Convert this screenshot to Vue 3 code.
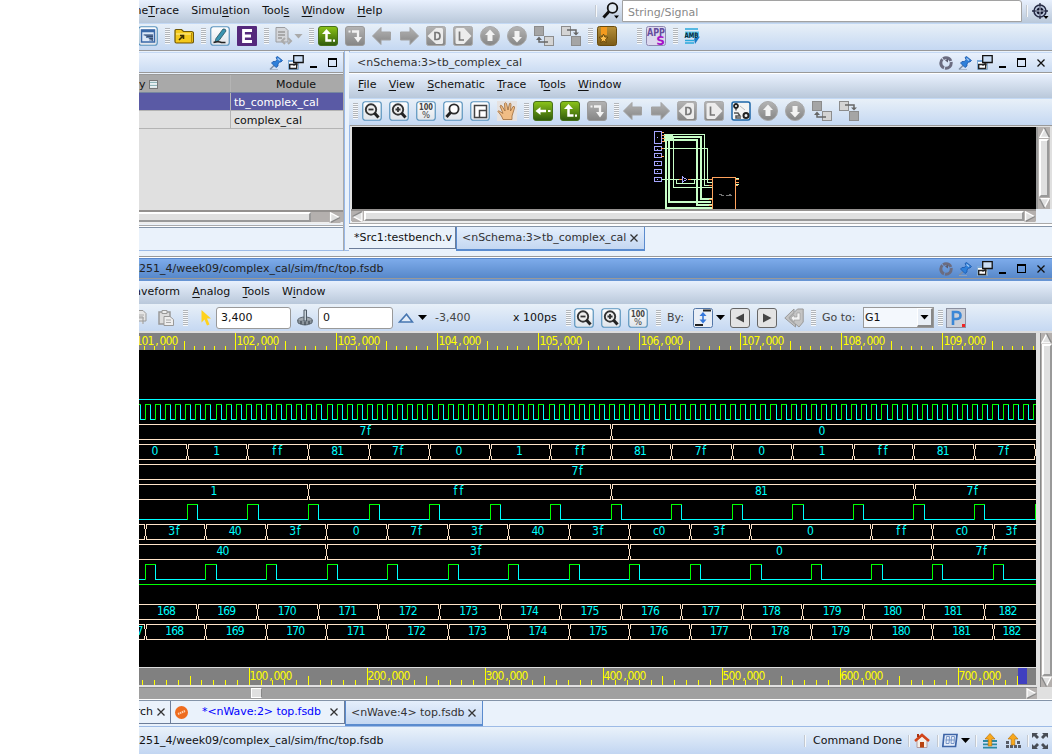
<script setup>
const mainMenu = [['One', 'T', 'race'], ['Simul', 'a', 'tion'], ['Tool', 's', ''], ['', 'W', 'indow'], ['', 'H', 'elp']]
const schemaMenu = [['', 'F', 'ile'], ['', 'V', 'iew'], ['', 'S', 'chematic'], ['', 'T', 'race'], ['T', 'o', 'ols'], ['', 'W', 'indow']]
const waveMenu = [['Wa', '', 'veform'], ['', 'A', 'nalog'], ['', 'T', 'ools'], ['W', 'i', 'ndow']]

const mainTools = ['filter', '|', 'folder', '|', 'edit', 'verdi', '|', 'doc', 'v', '|', 'driver', 'turn', 'back', 'fwd', 'd', 'l', 'up', 'down', 'hierup', 'hierdn', '|', 'book', ' ', '|', 'apps', '|', 'amb']
const schemaTools = ['|', 'zoomout', 'zoomin', 'hundred', 'zoom', 'fit', 'hand', '|', 'load', 'driver', 'turn', '|', 'back', 'fwd', 'd', 'l', 'gears', 'up', 'down', 'hierup', 'hierdn']

const range = (a, b) => Array.from({ length: b - a + 1 }, (_, i) => a + i)
const px = (v) => Math.floor(v) + 0.5
const chars = (s, cx) => [...s].map((_, i) => cx + (i - (s.length - 1) / 2) * 6).join(' ')
const left = (s, x) => [...s].map((_, i) => x + 3 + i * 6).join(' ')

const STEP = 60.55
function ticks(origin, pitch, count) {
  return range(-10, count).map((i) => {
    const k = ((i % 10) + 10) % 10
    return { x: px(origin + i * pitch - 139), major: k === 0, half: k === 5 }
  }).filter((t) => t.x > 0 && t.x < 898)
}
const tickPath = (list, half, minor) => list.map((t) => `M${t.x} ${t.major ? 0 : t.half ? half : minor}V17`).join('')
const topTicks = tickPath(ticks(235.1, 10.1, 85), 8, 13)
const botTicks = tickPath(ticks(249.2, 11.82, 65), 8, 12)
const topLabels = range(101, 109).map((n, i) => ({ s: n + ',000', x: Math.floor(134.1 + i * 101) - 139 + 2 }))
const botLabels = range(1, 7).map((n, i) => ({ s: n + '00,000', x: Math.floor(249.2 + i * 118.2) - 139 + 1 }))

const seq = (start, n) => range(0, n - 1).map((i) => start + i * STEP)
function bus(y, edges, labels) {
  let d = ''
  let from = -4
  for (const e of [...edges.map((v) => Math.floor(v) - 139), 905]) {
    const a = e - 0.5, t = y + 0.5, b = y + 15.5
    d += `M${from} ${t}H${a}V${t + 4}M${a} ${b - 4}V${b}H${from}`
    d += `M${e + 0.5} ${t + 4}V${b - 4}M${e + 1.5} ${t}V${t + 4}M${e + 1.5} ${b - 4}V${b}`
    from = e + 1
  }
  return { d, y, labels }
}
const mids = (edges, names, first, last) => names.map((s, i) => ({
  s,
  x: (i === 0 && first ? first : i === names.length - 1 && last ? last : (edges[i - (first ? 1 : 0)] + edges[i + (first ? 0 : 1)]) / 2 - 1) - 139
}))
const eB = seq(187.4, 15)
const eF = seq(145.3, 15)
const eFm = eF.filter((_, i) => i !== 11)
const eJ = seq(197.3, 14)
const nums = range(168, 182).map(String)
const buses = [
  bus(74, [611], mids([611], ['7f', '0'], 366, 822)),
  bus(94, eB, mids(eB, ['0', '1', 'ff', '81', '7f', '0', '1', 'ff', '81', '7f', '0', '1', 'ff', '81', '7f'], 155)),
  bus(114, [], [{ s: '7f', x: 439 }]),
  bus(134, [308, 611, 914], mids([308, 611, 914], ['1', 'ff', '81', '7f'], 214, 973)),
  bus(174, eFm, mids(eFm, ['3f', '40', '3f', '0', '7f', '3f', '40', '3f', 'c0', '3f', '0', 'ff', 'c0', '3f'], 0, 1012)),
  bus(194, [326, 629, 932], mids([326, 629, 932], ['40', '3f', '0', '7f'], 223, 982)),
  bus(254, eJ, mids(eJ, nums, 166.5, 1008)),
  bus(274, eF, [{ s: '7', x: 1 }, ...mids(eF, nums, 0, 1012)])
]
function pulses(y, start, period, width, n) {
  let high = '', low = ''
  for (let i = -1; i < n; i++) {
    const a = px(start + i * period - 139), b = px(start + i * period + width - 139), c = px(start + (i + 1) * period - 139)
    high += `M${a} ${y + 16}V${y + 0.5}H${b}`
    low += `M${b} ${y}V${y + 15.5}H${c - 0.5}`
  }
  return { high, low }
}
const waves = [
  pulses(54, 145.4, 10.09, 5.05, 90),
  pulses(154, 187.4, STEP, 10.1, 15),
  pulses(214, 145.4, STEP, 10.1, 15)
]
</script>

<template>
  <svg class="sprite" width="0" height="0">
    <defs>
      <linearGradient id="gGray" x2="0" y2="1"><stop stop-color="#b4b4b4" /><stop offset="1" stop-color="#858585" /></linearGradient>
      <linearGradient id="gGreen" x2="0" y2="1"><stop stop-color="#8cc518" /><stop offset="1" stop-color="#2f5a0c" /></linearGradient>
      <linearGradient id="gWhite" x2="0" y2="1"><stop stop-color="#fff" /><stop offset="1" stop-color="#dfe4ea" /></linearGradient>
      <linearGradient id="gGold" x2="0" y2="1"><stop stop-color="#b8913a" /><stop offset="1" stop-color="#7a5a16" /></linearGradient>
    </defs>
    <symbol id="frame" viewBox="0 0 20 20"><rect x=".75" y=".75" width="18.5" height="18.5" rx="2.5" fill="url(#gWhite)" stroke="#5a94be" stroke-width="1.2" /></symbol>
    <symbol id="filter" viewBox="0 0 20 20"><use href="#frame" /><path d="M3.500 4h13v12h-13z" fill="#dce8f8" stroke="#3a68a8" stroke-width="1.500" /><path d="M3 5h14" stroke="#3a68a8" stroke-width="2.500" /><path d="M5.500 8.500h9.500v7zM8 8.500" fill="#3a4f70" /><path d="M5.500 9h9.500M8 11.500h7M11 14h4" stroke="#5e7fae" /></symbol>
    <symbol id="folder" viewBox="0 0 20 20"><path d="M1 4.500q0-1 1-1h5.500l2 2h8q2 0 2 2v8q0 1.500-2 1.500h-15q-1.500 0-1.500-1.500z" fill="#f3c91e" stroke="#6d5708" stroke-width="1.200" /><path d="M2 8h16" stroke="#fff09a" /><path d="M5 14l4-4M6 9.500h3.500v3.500" fill="none" stroke="#3b2d00" stroke-width="1.600" /><path d="M17.500 7v9.500h-15" fill="none" stroke="#b48a08" /></symbol>
    <symbol id="edit" viewBox="0 0 20 20"><use href="#frame" /><path d="M6 12.500L13 3q3-.5 3 2L9 14.500l-4 1.500z" fill="#3b94b0" stroke="#23505e" stroke-width=".8" /><path d="M3.500 16.500q5-1.500 8 0h4" fill="none" stroke="#222" stroke-width="1.500" /></symbol>
    <symbol id="verdi" viewBox="0 0 20 20"><rect width="20" height="20" rx="1" fill="#55297c" /><path d="M15 4.500H6.500v11H15M6.500 10h7.500" fill="none" stroke="#fff" stroke-width="2.800" /></symbol>
    <symbol id="doc" viewBox="0 0 20 20"><path d="M3 1.500h9l3 3V16H3z" fill="#d4d6da" stroke="#9b9da1" /><path d="M5 6h7M5 9h7M5 12h4" stroke="#999" stroke-width="1.400" /><path d="M12 12l-3 3 3 3M15 12l3 3-3 3" fill="none" stroke="#aaa" stroke-width="2" /></symbol>
    <symbol id="driver" viewBox="0 0 20 20"><rect x=".5" y=".5" width="19" height="19" rx="2.500" fill="url(#gGreen)" stroke="#47701a" /><path d="M8.500 6v8.500H13.500" fill="none" stroke="#fff" stroke-width="2.500" /><path d="M4 8L8.500 3l4.500 5z" fill="#fff" /><path d="M15 13.500h2v2.200h-2z" fill="#fff" /></symbol>
    <symbol id="load" viewBox="0 0 20 20"><rect x=".5" y=".5" width="19" height="19" rx="2.500" fill="url(#gGreen)" stroke="#47701a" /><path d="M6 10h7" stroke="#fff" stroke-width="2.500" /><path d="M2.500 10l5-4v8z" fill="#fff" /><path d="M15 9h2.500v2H15z" fill="#fff" /></symbol>
    <symbol id="turn" viewBox="0 0 20 20"><rect x=".5" y=".5" width="19" height="19" rx="2.500" fill="url(#gGray)" stroke="#9a9a9a" /><path d="M7 5.500h6v7" fill="none" stroke="#f2f2f2" stroke-width="2.300" /><path d="M3.500 4.500h2v2h-2zM9 11h8L13 16.500z" fill="#f2f2f2" /></symbol>
    <symbol id="back" viewBox="0 0 20 20"><path d="M.5 10L9 1.500V6h9.500v8H9v4.500z" fill="url(#gGray)" stroke="#a2a2a2" /></symbol>
    <symbol id="fwd" viewBox="0 0 20 20"><path d="M19.500 10L11 1.500V6H1.500v8H11v4.500z" fill="url(#gGray)" stroke="#a2a2a2" /></symbol>
    <symbol id="d" viewBox="0 0 20 20"><rect x=".5" y=".5" width="19" height="19" rx="2" fill="url(#gGray)" stroke="#aaa" /><path d="M1.500 10L10 2h5.500q1.500 0 1.500 1.500v13q0 1.500-1.500 1.500H10z" fill="#ececec" /><path d="M9 6.500v7h2q3 0 3-3.500t-3-3.500z" fill="none" stroke="#777" stroke-width="1.700" /></symbol>
    <symbol id="l" viewBox="0 0 20 20"><rect x=".5" y=".5" width="19" height="19" rx="2" fill="url(#gGray)" stroke="#aaa" /><path d="M18.500 10L11 2H4Q2.500 2 2.500 3.500v13Q2.500 18 4 18h7z" fill="#ececec" /><path d="M6.500 5.500V14H11" fill="none" stroke="#777" stroke-width="1.700" /></symbol>
    <symbol id="up" viewBox="0 0 20 20"><circle cx="10" cy="10" r="9.500" fill="url(#gGray)" stroke="#a8a8a8" /><path d="M10 3.500l5 5.500h-2.500v6h-5V9H5z" fill="#f3f3f3" /></symbol>
    <symbol id="down" viewBox="0 0 20 20"><circle cx="10" cy="10" r="9.500" fill="url(#gGray)" stroke="#a8a8a8" /><path d="M10 16.500L5 11h2.500V5h5v6H15z" fill="#f3f3f3" /></symbol>
    <symbol id="hierup" viewBox="0 0 20 20"><rect x=".5" y=".5" width="9" height="9" fill="#a5a5a5" stroke="#8c8c8c" /><rect x="10.500" y="10.500" width="9" height="9" fill="#d4d4d4" stroke="#8c8c8c" /><path d="M5 12v4h9" fill="none" stroke="#666" stroke-width="1.500" /><path d="M2 14l3-3.500L8 14z" fill="#666" /></symbol>
    <symbol id="hierdn" viewBox="0 0 20 20"><rect x=".5" y=".5" width="9" height="9" fill="#d4d4d4" stroke="#8c8c8c" /><rect x="10.500" y="10.500" width="9" height="9" fill="#a5a5a5" stroke="#8c8c8c" /><path d="M6 4h9V8" fill="none" stroke="#666" stroke-width="1.500" /><path d="M12 6.500l3 3 3-3z" fill="#666" /></symbol>
    <symbol id="book" viewBox="0 0 20 20"><rect x=".5" y=".5" width="19" height="19" rx="2" fill="url(#gGold)" stroke="#6a4c0c" /><path d="M4 1h6v8H4z" fill="#f39a1e" /><path d="M6.500 8l1.300 3 3.200.3-2.500 2.200.8 3L6.500 15l-2.800 1.500.8-3L2 11.300l3.200-.3z" fill="#ffc04e" stroke="#5e3c00" stroke-width=".8" /></symbol>
    <symbol id="apps" viewBox="0 0 20 20"><rect x=".5" y=".5" width="19" height="19" rx="2" fill="#dcd8ee" stroke="#8e88b0" /><text x="10" y="9.500" text-anchor="middle" textLength="18" lengthAdjust="spacingAndGlyphs" font-size="10.500" font-weight="bold" fill="#654c9c">APP</text><text x="14.500" y="18.500" text-anchor="middle" font-size="12" font-weight="bold" fill="#a412c8">S</text></symbol>
    <symbol id="amb" viewBox="0 0 20 20"><path d="M3 3h13M3 14.500h9M3 17h9" stroke="#29a8dc" stroke-width="1.600" /><path d="M3 5.500h14v6H3z" fill="#5cc4ea" /><text x="9.500" y="11.500" text-anchor="middle" textLength="14" lengthAdjust="spacingAndGlyphs" font-size="7.500" font-weight="bold" fill="#0c2a3c">AMB</text><path d="M12 12.500l6-2-5 7.500z" fill="#1779c4" /></symbol>
    <symbol id="zoom" viewBox="0 0 20 20"><use href="#frame" /><circle cx="11" cy="8" r="4.600" fill="#fff" stroke="#2c2c2c" stroke-width="1.800" /><path d="M7.500 11.500L3.500 16" stroke="#222" stroke-width="3" /></symbol>
    <symbol id="zoomout" viewBox="0 0 20 20"><use href="#frame" /><circle cx="9" cy="8.500" r="5.200" fill="#eee" stroke="#333" stroke-width="1.900" /><path d="M6.500 8.500h5" stroke="#333" stroke-width="1.800" /><path d="M12.500 12l4 4.500" stroke="#222" stroke-width="3" /></symbol>
    <symbol id="zoomin" viewBox="0 0 20 20"><use href="#frame" /><circle cx="9" cy="8.500" r="5.200" fill="#eee" stroke="#333" stroke-width="1.900" /><path d="M6.500 8.500h5M9 6v5" stroke="#333" stroke-width="1.800" /><path d="M12.500 12l4 4.500" stroke="#222" stroke-width="3" /></symbol>
    <symbol id="hundred" viewBox="0 0 20 20"><use href="#frame" /><text x="10" y="9" text-anchor="middle" textLength="14" lengthAdjust="spacingAndGlyphs" font-size="8" font-weight="bold" fill="#444">100</text><text x="10" y="17" text-anchor="middle" font-size="8.500" fill="#444">%</text></symbol>
    <symbol id="fit" viewBox="0 0 20 20"><use href="#frame" /><path d="M4.500 4.500h12v12h-12zM9.500 9.500h7v7h-7z" fill="#fff" stroke="#444" stroke-width="1.500" /></symbol>
    <symbol id="hand" viewBox="0 0 20 20"><path d="M0 0h20v20H0z" fill="#e6e2e0" /><path d="M6 18.500C5 15 2.500 12.500 1 10.500q0-1.500 2 0l3 2L3 5q.5-1.500 2 0l3 5L7.500 2.500q1-1.500 2 0L11 9l1.500-6.500q1.500-1 1.500 1L13.500 10 16 5.500q2-.5 1.500 1.500L15 15v3.500z" fill="#f0bd85" stroke="#9c6a38" stroke-width=".8" /></symbol>
    <symbol id="gears" viewBox="0 0 20 20"><rect x="1" y="1" width="18" height="18" rx="2" fill="#f4f4f4" stroke="#1c66a8" stroke-width="1.500" /><circle cx="5" cy="5" r="2" fill="none" stroke="#222" stroke-width="1.800" /><circle cx="15" cy="14.500" r="2.500" fill="none" stroke="#222" stroke-width="2" /><path d="M5 8v1.500M3 12h4l2 3H5v2h5" fill="none" stroke="#555" stroke-width="1.500" /><path d="M9 5l5 4" stroke="#bbb" /></symbol>
    <symbol id="ring" viewBox="0 0 14 14"><circle cx="7" cy="7" r="5.200" fill="none" stroke="#6b6c80" stroke-width="3" stroke-dasharray="9 1 10 .8" /><path d="M6 4.500l3-2v4z" fill="#5b5c70" /></symbol>
    <symbol id="pin" viewBox="0 0 14 14"><path d="M1 13.500l5-5" stroke="#7d8da3" stroke-width="1.400" /><path d="M1 13.500h8" stroke="#9aa9bc" stroke-width=".7" /><path d="M7 1.500l1.500-1 5 4-1.500 1.500-1.500 0-1.500 2 0 2-2 1.500L2.500 7l1.500-1.500 2.500 0L8 3.500z" fill="#2f80da" stroke="#1c57a8" stroke-width=".8" /><path d="M8.500 2.500l2.500 2" stroke="#a7cdf7" stroke-width="1.200" /></symbol>
    <symbol id="float" viewBox="0 0 16 15"><path d="M.5 5.500h10v9H.5z" fill="#fff" stroke="#84add2" /><path d="M0 5h11v2H0z" fill="#7ba9d9" /><path d="M1.700 9.500h7v4h-7z" fill="#fff" stroke="#222" stroke-width="1.400" /><path d="M5.500 11l3-3M6.500 8H9v2.500" fill="none" stroke="#222" /><path d="M5.700.7h9.500v6.800H5.700z" fill="#c9dcf3" stroke="#111" stroke-width="1.300" /></symbol>
    <symbol id="arrow3d" viewBox="0 0 10 10"><path d="M0 0h10v10H0z" fill="#b4b0ae" /><path d="M1 1v8.500L9.500 5z" fill="#e0e0e0" /><path d="M1 9.500V.8L9 5" fill="none" stroke="#fff" stroke-width="1.200" /><path d="M1 9.500L9.500 5" stroke="#888" stroke-width="1.200" /></symbol>
  </svg>

  <main class="desk">
    <nav class="menu menu-main">
      <span v-for="(m, i) in mainMenu" :key="i">{{ m[0] }}<u>{{ m[1] }}</u>{{ m[2] }}</span>
      <div class="search">
        <i class="sep"></i>
        <svg width="18" height="18" viewBox="0 0 18 18"><circle cx="10.500" cy="6" r="4.800" fill="#dfe8f2" stroke="#111" stroke-width="1.800" /><path d="M7 9.500L1.500 15.500" stroke="#111" stroke-width="3" /><path d="M12 13.500h5l-2.500 3z" /></svg>
        <div class="search-box">String/Signal</div>
        <i class="sep"></i>
        <svg width="17" height="17" viewBox="0 0 17 17"><circle cx="8" cy="8" r="6" fill="#bcc9df" stroke="#252a44" stroke-width="1.500" /><circle cx="8" cy="8" r="3.500" fill="#10142e" /><path d="M8 0v16M0 8h16" stroke="#252a44" stroke-width="1.300" /><path d="M8 3.500v9M3.500 8h9" stroke="#dfe8f5" stroke-width=".8" /><path d="M11.500 13h5L14 16z" /></svg>
      </div>
    </nav>
    <div class="tools tools-main">
      <template v-for="(t, i) in mainTools" :key="i">
        <i v-if="t === '|'" class="grip"></i>
        <i v-else-if="t === ' '" class="space"></i>
        <i v-else-if="t === 'v'" class="drop pale"></i>
        <svg v-else class="ico"><use :href="'#' + t" /></svg>
      </template>
    </div>

    <div class="upper">
      <section class="left">
        <header class="title title-left">
          <svg width="14" height="14"><use href="#pin" /></svg>
          <svg width="16" height="15"><use href="#float" /></svg>
          <i class="min"></i><i class="max"></i>
        </header>
        <div class="table">
          <div class="row head"><span>y <i class="sorter"></i></span><span>Module</span></div>
          <div class="row picked"><span></span><span>tb_complex_cal</span></div>
          <div class="row"><span></span><span>complex_cal</span></div>
        </div>
        <div class="hscroll left-scroll"><div class="thumb"></div><svg width="12" height="11"><use href="#arrow3d" /></svg></div>
        <div class="left-foot"></div>
      </section>
      <section class="right">
        <header class="title"><span class="name">&lt;nSchema:3&gt;tb_complex_cal</span>
          <svg width="14" height="14"><use href="#ring" /></svg>
          <svg width="14" height="14"><use href="#pin" /></svg>
          <svg width="16" height="15"><use href="#float" /></svg>
          <i class="min"></i><i class="max"></i><svg width="8" height="8" class="cross"><path d="M.5.5l7 7M7.500.5l-7 7" /></svg>
        </header>
        <nav class="menu menu-schema"><span v-for="(m, i) in schemaMenu" :key="i">{{ m[0] }}<u>{{ m[1] }}</u>{{ m[2] }}</span></nav>
        <div class="tools tools-schema">
          <template v-for="(t, i) in schemaTools" :key="i">
            <i v-if="t === '|'" class="grip"></i>
            <svg v-else class="ico"><use :href="'#' + t" /></svg>
          </template>
        </div>
        <div class="canvas-wrap">
          <svg class="schema" width="684" height="82" viewBox="352 127 684 82" shape-rendering="crispEdges">
            <g fill="none" stroke="#a6a6ff">
              <path d="M654.500 131.500h7v12h-7zM654.500 146.500h7v4h-7zM654.500 153.500h7v4h-7zM654.500 161.500h7v4h-7zM654.500 169.500h7v4h-7zM654.500 177.500h7v4h-7z" />
              <path d="M657 137.500h1M657 149.500h1M657 155.500h1M657 163.500h1M657 171.500h1M657 179.500h1" />
            </g>
            <g fill="none" stroke="#c8ffc8">
              <path d="M664 134.500h40.500v50.500h7.500M662 148.500h45.500v33.500h4M673.500 138v49.500h38M662 179.500h18M690 179.500h21M676.500 180v3.500h18v-4" />
              <path d="M664 137h37v62h11M664 140h33v65h15M669 138v64h42M666 136v72h46" stroke-width="2" />
              <path d="M664 137h9" stroke-width="4" />
            </g>
            <path d="M662 132.500h2M662 135.500h3M662 138.500h3M662 141.500h3M661 148.500h3M661 156.500h3M679 179.500h3M688 179.500h3M709 179.500h3M709 185.500h3M709 199.500h3M709 205.500h3M736 179.500h3M736 182.500h3M736 185.500h2" stroke="#ffa25c" />
            <path d="M712.500 209v-31.500h23V209" fill="none" stroke="#ffa25c" />
            <path d="M682.500 177v5l4-2.500z" fill="none" stroke="#a6a6ff" />
            <path d="M719 194.500h3M721 195.500h3M726 195.500h6M729 194.500h2" stroke="#777" />
            <path d="M736 178.500h3M736 184.500h3" stroke="#c8ffc8" />
          </svg>
          <div class="vscroll"><svg width="11" height="12" class="r-up"><use href="#arrow3d" /></svg><div class="thumb"></div><svg width="11" height="12" class="r-dn"><use href="#arrow3d" /></svg></div>
        </div>
        <div class="hscroll right-scroll"><svg width="13" height="11" class="r-lf"><use href="#arrow3d" /></svg><div class="thumb"></div><svg width="12" height="11"><use href="#arrow3d" /></svg></div>
        <div class="tabs">
          <div class="tab src">*Src1:testbench.v</div>
          <div class="tab on">&lt;nSchema:3&gt;tb_complex_cal <svg width="8" height="8" class="cross"><path d="M.5.5l7 7M7.500.5l-7 7" /></svg></div>
        </div>
      </section>
    </div>

    <section class="wave">
      <header class="title blue"><span class="name">251_4/week09/complex_cal/sim/fnc/top.fsdb</span>
        <svg width="14" height="14"><use href="#ring" /></svg>
        <svg width="14" height="14"><use href="#pin" /></svg>
        <svg width="16" height="15"><use href="#float" /></svg>
        <i class="min"></i><i class="max"></i><svg width="8" height="8" class="cross"><path d="M.5.5l7 7M7.500.5l-7 7" /></svg>
      </header>
      <nav class="menu menu-wave"><span v-for="(m, i) in waveMenu" :key="i">{{ m[0] }}<u>{{ m[1] }}</u>{{ m[2] }}</span></nav>
      <div class="tools tools-wave">
        <svg class="copy" width="8" height="18"><path d="M-3 1.500h7l3 3V12H-3zM-3 8h7v7" fill="#e5e5e5" stroke="#999" /><path d="M0 6h5M0 9h5" stroke="#aaa" /></svg>
        <svg class="paste" width="17" height="18"><path d="M1 3h11v12H1z" fill="#ddd" stroke="#999" stroke-width="1.500" /><path d="M4 1.500h5v3H4z" fill="#eee" stroke="#999" /><path d="M6 7.500h6l3.500 3v6H6z" fill="#eee" stroke="#999" /><path d="M8 11h5M8 13.500h5" stroke="#aaa" /></svg>
        <i class="grip"></i>
        <svg class="cursor" width="10" height="16"><path d="M.5 0v12.500l3-3 2.500 6 2.500-1-2.500-6H10z" fill="#ffd21c" /></svg>
        <div class="field">3,400</div>
        <svg class="marker" width="18" height="17"><ellipse cx="9" cy="11.500" rx="7.500" ry="3.500" fill="#a2a9b0" stroke="#5d6872" /><path d="M2 11v3q7 4 14 0v-3" fill="#8b949c" stroke="#5d6872" /><path d="M5 12v3M9 13v3M13 12v3" stroke="#3c4650" stroke-width="1.200" /><path d="M8 1h2.500v11H8z" fill="#cad4dc" stroke="#4d5964" /></svg>
        <div class="field">0</div>
        <svg class="delta" width="16" height="10"><path d="M1.500 9L8.500 1.200 14.500 9z" fill="#e2ecf8" stroke="#4676b0" stroke-width="1.600" /></svg>
        <i class="drop"></i><span class="diff">-3,400</span><span class="unit">x 100ps</span>
        <i class="grip"></i>
        <svg class="ico"><use href="#zoomout" /></svg><svg class="ico"><use href="#zoomin" /></svg><svg class="ico"><use href="#hundred" /></svg>
        <i class="grip grip-by"></i><span class="by">By:</span>
        <svg class="edge" width="20" height="20"><rect x=".5" y=".5" width="19" height="19" rx="2" fill="#e9eef6" stroke="#5377a8" /><path d="M10 2.500h8M2 17h8" stroke="#222" stroke-width="1.800" /><path d="M10 5v9" stroke="#2d6fd0" stroke-width="1.500" /><path d="M6.500 8L10 4l3.500 4zM6.500 11.500L10 15.500l3.500-4z" fill="#3678dc" /></svg>
        <i class="drop"></i>
        <svg class="step" width="20" height="20"><rect x=".5" y=".5" width="19" height="19" rx="2.500" fill="#e3e3e3" stroke="#666" /><path d="M14 5.500v9L5.500 10z" fill="#444" /></svg>
        <svg class="step" width="20" height="20"><rect x=".5" y=".5" width="19" height="19" rx="2.500" fill="#e3e3e3" stroke="#666" /><path d="M6 5.500v9l8.500-4.500z" fill="#444" /></svg>
        <svg class="undo" width="20" height="20"><path d="M.8 10L10 1v3.500L13.500 1h5.700v13L15 19l-3.500-3v3z" fill="#c4c4c4" stroke="#999" /><path d="M5 10l5-5M5 10l6 6" stroke="#a5a5a5" stroke-width="1.500" /><path d="M7 10l3-3v2h3V5h3v7h-6v2z" fill="#f2f2f2" stroke="#999" stroke-width=".6" /></svg>
        <i class="grip"></i><span class="goto">Go to:</span>
        <div class="select"><span>G1</span><b><i class="drop"></i></b></div>
        <i class="grip"></i>
        <svg class="pico" width="20" height="20"><rect x=".5" y=".5" width="19" height="19" fill="#ccd0d9" stroke="#8b90a0" /><path d="M7 17V4h3.500q4 0 4 3.500t-4 3.500H8" fill="none" stroke="#3b87d6" stroke-width="2.600" /><path d="M16 16h3v3h-3z" fill="#f32525" /></svg>
      </div>
      <div class="plot-wrap">
        <div class="plot">
          <svg class="ruler r-top" width="897" height="17"><path :d="topTicks" /><text v-for="l in topLabels" :key="l.s" :x="left(l.s, l.x)" y="12">{{ l.s }}</text></svg>
          <svg class="signals" width="897" height="317">
            <path d="M0 49.500H897" stroke="#00ffff" /><path d="M0 234.500H897" stroke="#00ff00" />
            <g v-for="(w, i) in waves" :key="'w' + i" fill="none"><path :d="w.low" stroke="#00ffff" /><path :d="w.high" stroke="#00ff00" /></g>
            <g v-for="b in buses" :key="b.y">
              <path :d="b.d" fill="none" stroke="#ffe4c8" />
              <text v-for="(l, i) in b.labels" :key="i" :x="chars(l.s, l.x)" :y="b.y + 11">{{ l.s }}</text>
            </g>
          </svg>
          <svg class="ruler r-bot" width="897" height="17"><path :d="botTicks" /><text v-for="l in botLabels" :key="l.s" :x="left(l.s, l.x)" y="12">{{ l.s }}</text><rect x="879" width="9" height="16" fill="#4040c0" /></svg>
          <div class="track"><i></i><svg width="11" height="11"><use href="#arrow3d" /></svg></div>
        </div>
        <div class="vscroll"><svg width="11" height="11" class="r-up"><use href="#arrow3d" /></svg><div class="thumb"></div><svg width="11" height="11" class="r-dn"><use href="#arrow3d" /></svg></div>
      </div>
      <div class="tabs wave-tabs">
        <div class="tab first"><span>rch</span><svg width="8" height="8" class="cross"><path d="M.5.5l7 7M7.500.5l-7 7" /></svg></div>
        <div class="tab mid"><svg width="13" height="13"><circle cx="6.500" cy="6.500" r="6.500" fill="#ee6c1f" /><path d="M3 8l7-3" stroke="#ffd0ae" stroke-width="2" stroke-dasharray="1.500 .6" /></svg><span>*&lt;nWave:2&gt; top.fsdb</span><svg width="8" height="8" class="cross"><path d="M.5.5l7 7M7.500.5l-7 7" /></svg></div>
        <div class="tab on">&lt;nWave:4&gt; top.fsdb <svg width="8" height="8" class="cross"><path d="M.5.5l7 7M7.500.5l-7 7" /></svg></div>
      </div>
    </section>
    <footer class="status">
      <span class="path">251_4/week09/complex_cal/sim/fnc/top.fsdb</span><i class="sep"></i><span class="done">Command Done</span><i class="sep"></i>
      <svg class="home" width="16" height="15"><path d="M3 7v7.500h10V7L8 3z" fill="#f5eee6" stroke="#a88" stroke-width=".8" /><path d="M1 8l7-6 7 6" fill="none" stroke="#d2451a" stroke-width="2.500" /><path d="M3 1h2v3H3z" fill="#a63210" /><path d="M6 9h4v5.500H6z" fill="#b8420f" /></svg><i class="sep"></i>
      <svg class="grid" width="16" height="15"><path d="M2 1.500h13l-1.500 12H.8z" fill="#e6eefa" stroke="#3d64a6" stroke-width="1.700" /><path d="M4.500 3.500h3l-.5 7h-3zM9.500 3.500h3l-.5 7h-3zM3.500 7h9" fill="none" stroke="#6e8fc4" stroke-width=".9" /></svg>
      <i class="drop"></i><i class="sep"></i>
      <svg class="lay" width="16" height="16"><path d="M1 8h14M1 11.300h14M1 14.600h14" stroke="#2b8aa4" stroke-width="1.800" /><path d="M8 .5l5 5.500H9.800v7H6.200V6H3z" fill="#f8a81c" stroke="#b06c08" stroke-width=".6" /></svg>
      <svg class="blk" width="16" height="16"><path d="M1 8h3v3H1zM12 8h3v3h-3zM1 12h3v3H1zM5 12h3v3H5zM9 12h3v3H9zM13 12h3v3h-3z" fill="#565b66" /><path d="M8 .5l5 5.500H9.800v6H6.200V6H3z" fill="#f8a81c" stroke="#b06c08" stroke-width=".6" /></svg><i class="sep"></i>
      <svg class="full" width="16" height="16"><path d="M0 0h6L4.500 1.500 7 4 5 6 2 3 0 5zM16 0h-6l1.500 1.500L9 4l2 2 3-3 2 2zM0 16h6l-1.500-1.500L7 12l-2-2-3 3-2-2zM16 16h-6l1.500-1.500L9 12l2-2 3 3 2-2z" fill="#484d55" /></svg>
    </footer>
  </main>
</template>

<style>
html, body { margin: 0; overflow: hidden; background: #fff; }
</style>
<style scoped>
* { box-sizing: border-box; }
.sprite { position: absolute; }
.desk { margin-left: 139px; width: 913px; height: 754px; overflow: hidden; display: flex; flex-direction: column; background: #eaf2fb; color: #111; font: 11px/14px "DejaVu Sans", sans-serif; white-space: nowrap; }
svg { flex: none; display: block; }
i { font-style: normal; }
.menu { display: flex; align-items: center; gap: 12.3px; flex: none; background: linear-gradient(#e8f0fd, #b9c8da); }
.menu u { text-underline-offset: 2px; }
.menu-main { height: 23px; padding-bottom: 2px; }
.menu-main > span:first-child { width: 40px; display: flex; justify-content: flex-end; }
.search { margin-left: auto; height: 23px; display: flex; align-items: center; margin-top: 1px; }
.sep { width: 2px; height: 12px; background: #c3c9d1; border-right: 1px solid #f6f8fa; flex: none; }
.search > svg:first-of-type { margin: 0 2px 0 5px; }
.search-box { width: 400px; height: 22px; margin-top: -1px; background: #fff; border: 1px solid #a2a2a2; border-radius: 0 3px 0 0; padding: 5px 5px 0; line-height: 13px; color: #888; }
.search .sep:nth-of-type(2) { margin: 0 4px; }
.search > svg:last-child { margin-right: 3px; }
.tools { display: flex; align-items: center; flex: none; background: linear-gradient(#e8f0f8, #c5d8f2); }
.tools-main { height: 28px; border-top: 1px solid #c3d9f5; border-bottom: 1px solid #999; padding-bottom: 2px; }
.ico { width: 20px; height: 20px; margin: 0 3px 0 4px; }
.tools-main > .ico:first-child { margin-left: -1px; }
.grip { width: 5px; height: 16px; margin: 0 0 0 4px; flex: none; background: repeating-linear-gradient(#b2b6bb 0 1px, #f7f9fb 1px 2px); }
.space { width: 13px; }
.drop { flex: none; width: 9px; height: 5px; background: #000; clip-path: polygon(0 0, 100% 0, 50% 100%); }
.pale { background: #aaa; margin-left: -2px; margin-right: 2px; }
.upper { flex: none; height: 200px; display: grid; grid-template-columns: 205px 703px; column-gap: 5px; border-bottom: 1px solid #9dbbe6; padding-top: 1px; background: linear-gradient(90deg, transparent 205px, #97b8e8 205px 206px, #eaf2fb 206px 210px, #97b8e8 210px 211px, transparent 211px); }
.title { height: 21px; flex: none; display: flex; align-items: center; background: linear-gradient(#e9f1fc, #cbdcf3); border-top: 1px solid #c5d9f4; border-bottom: 1px solid #999; color: #333; }
.title .name { margin-right: auto; }
.title > svg:not(.cross) { margin-right: 5px; }
.title > svg:not(.cross):has(+ .min) { margin-right: 2px; }
.min { width: 7px; height: 2px; background: #000; margin: 8px 11px 0 4px; }
.max { width: 9px; height: 9px; border: 1px solid #000; border-top-width: 2px; margin-right: 11px; }
.cross { stroke: #111; stroke-width: 1.300; fill: none; margin-right: 7px; }
.left { display: flex; flex-direction: column; min-width: 0; border-right: 1px solid #aaa; }
.title-left { justify-content: flex-end; }
.title-left .max { margin-right: 6px; }
.table { flex: none; height: 136px; margin-top: 1px; background: #e0e0e0; border-top: 1px solid #999; }
.row { height: 18px; display: grid; grid-template-columns: 92px 112px; line-height: 18px; border-bottom: 1px solid #b4b4b4; }
.row span { padding: 1px 0 0 3px; height: 17px; }
.row span:first-child { border-right: 1px solid #b4b4b4; padding-left: 0; }
.row.head { background: #a9a9a9; border-color: #7888a0; }
.row.head span:last-child { padding-left: 45px; }
.row.picked { background: #5a5aa5; color: #fff; }
.sorter { display: inline-block; width: 9px; height: 9px; vertical-align: -1px; border: 1px solid #777; background: repeating-linear-gradient(#dfe9ec 0 1px, #8fb4b8 1px 2px, #e9f0f2 2px 3px); }
.hscroll { flex: none; height: 14px; display: flex; align-items: center; background: #b4b0ae; border-top: 2px solid #94918f; border-bottom: 2px solid #eee; }
.thumb { background: #e0e0e0; border: 2px solid #fff; border-right-color: #999; border-bottom-color: #999; }
.left-scroll .thumb { width: 172px; height: 10px; margin-right: 18px; border-left: 0; }
.left-foot { flex: none; height: 3px; margin-top: 1px; border-bottom: 1px solid #8494a8; border-top: 1px solid #aaa; background: #fff; }
.right { min-width: 0; display: flex; flex-direction: column; }
.right .title .name { padding-left: 8px; }
.menu-schema { height: 25px; padding: 0 9px 3px; border-top: 1px solid #fff; }
.tools-schema { height: 27px; border-top: 1px solid #c3d9f5; padding-bottom: 2px; }
.canvas-wrap { flex: none; height: 84px; margin-left: 1px; padding: 1px 0 0 2px; display: flex; border-top: 1px solid #999; background: #e0e0e0; }
.schema { background: #000; }
.vscroll { display: flex; flex-direction: column; align-items: center; background: #b4b0ae; border-left: 2px solid #999; }
.canvas-wrap .vscroll { width: 14px; height: 82px; }
.vscroll .thumb { flex: 1; width: 10px; }
.r-up { transform: rotate(-90deg); }
.r-dn { transform: rotate(90deg); }
.r-lf { transform: rotate(180deg); }
.right-scroll { width: 685px; margin-left: 2px; }
.right-scroll .thumb { flex: 1; height: 10px; }
.tabs { display: flex; flex: none; height: 25px; margin-top: 3px; border-top: 1px solid #8494a8; background: #eaf2fb; }
.right .tabs { box-shadow: 0 -2px #fff, 0 -3px #aaa; }
.tab { display: flex; align-items: center; height: 22px; border: 1px solid #6c7d99; border-top: 0; padding: 0 5px; }
.tab .cross { margin: 0; margin-left: auto; stroke: #333; }
.tab.src { width: 107px; padding: 0 0 0 5px; border-left: 0; letter-spacing: -.03px; }
.tab.on { height: 24px; width: 189px; background: linear-gradient(#e5effc, #c4d7f1); border: 1px solid #5a8bce; border-top: 0; border-bottom-width: 2px; color: #333; padding-right: 6px; letter-spacing: -.03px; }
.wave { flex: none; height: 470px; border-top: 1px solid #999; margin-top: 5px; display: flex; flex-direction: column; background: #fff; padding-top: 1px; }
.title.blue { height: 21px; background: linear-gradient(#7dabea, #5788ca); border-top: 1px solid #5888cd; color: #222; }
.menu-wave { height: 25px; border-top: 2px solid #6794d3; padding-bottom: 1px; }
.menu-wave > span:first-child { width: 41px; display: flex; justify-content: flex-end; }
.tools-wave { height: 27px; }
.tools-wave .grip { margin: 0; }
.copy { margin-right: 11px; }
.paste { margin-right: 8px; }
.cursor { margin: 0 5px 0 13px; }
.field { width: 75px; height: 22px; border: 1px solid #999; border-radius: 3px; background: #fff; padding: 3px 4px; flex: none; }
.marker { margin: 0 4px 0 5px; }
.delta { margin: 0 4px 0 5px; }
.diff { width: 78px; margin-left: 8px; color: #444; flex: none; }
.unit { width: 53px; flex: none; }
.unit + .grip + .ico { margin-left: 3px; }
.tools-wave .grip-by { margin-left: 5px; }
.by { color: #444; width: 26px; margin-left: 6px; flex: none; }
.edge { margin-right: 3px; }
.edge + .drop { margin-right: 5px; }
.step { margin-right: 7px; }
.undo { margin-right: 7px; }
.goto { color: #444; width: 41px; margin-left: 6px; flex: none; }
.select { width: 71px; height: 21px; border: 1px solid #999; background: #f4f8fd; display: flex; flex: none; justify-content: space-between; padding-left: 1px; line-height: 19px; margin-right: 4px; }
.select b { width: 16px; border: 1px solid #fff; border-right: 2px solid #888; border-bottom: 2px solid #888; background: #e8eef6; display: flex; align-items: center; justify-content: center; }
.pico { margin-left: 3px; }
.plot-wrap { flex: none; height: 368px; border-top: 2px solid #dcdcdc; display: flex; background: #e0e0e0; }
.plot { width: 898px; }
.plot text { font: 12px "DejaVu Sans Condensed", "DejaVu Sans", sans-serif; font-stretch: condensed; text-anchor: middle; }
.ruler { background: #808080; shape-rendering: crispEdges; }
.ruler path { stroke: #ff0; fill: none; }
.ruler text { fill: #ff0; }
.signals { background: #000; shape-rendering: crispEdges; }
.signals text { fill: #0ff; }
.r-bot { box-shadow: 0 -1px #ddd; margin-top: 1px; }
.track { height: 12px; margin-top: 2px; background: #a0a0a0; border-top: 1px solid #888; display: flex; justify-content: space-between; }
.track i { margin-left: 112px; width: 11px; height: 10px; background: #e0e0e0; border: 1px solid #fff; border-right-color: #888; }
.plot-wrap .vscroll { width: 12px; height: 354px; margin-left: 3px; border-left: 1px solid #888; }
.wave-tabs { height: 26px; margin-top: 1px; }
.wave-tabs .tab { height: 23px; }
.wave-tabs .first { width: 32px; padding: 0 5px 0 0; border-left: 0; overflow: hidden; }
.wave-tabs .first span { width: 14px; display: flex; justify-content: flex-end; }
.wave-tabs .mid { width: 174px; color: #00f; padding: 0 6px 0 4px; border-left: 0; letter-spacing: -.08px; }
.mid span { margin-left: 14px; }
.wave-tabs .tab.on { width: 138px; height: 25px; letter-spacing: -.08px; }
.status { flex: 1; display: flex; align-items: center; border-top: 1px solid #9dbbe6; background: linear-gradient(#eaf2fa, #c2d6f2); }
.path { flex: 1; }
.done { width: 89px; margin: 0 6px 0 7px; }
.home { margin: 0 7px 0 4px; }
.grid { margin: 0 3px; }
.status .drop { margin-right: 5px; }
.lay { margin: 0 7px 0 5px; }
.blk { margin-right: 6px; }
.full { margin: 0 4px 0 3px; }
</style>
